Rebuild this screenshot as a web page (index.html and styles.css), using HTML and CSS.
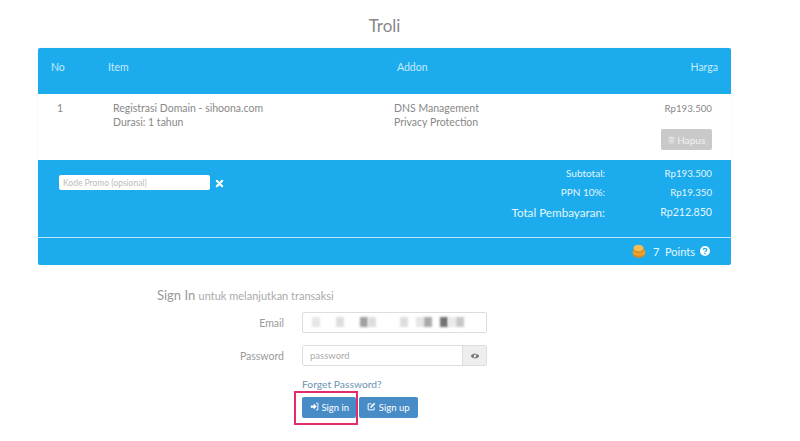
FILE: index.html
```html
<!DOCTYPE html>
<html lang="en">
<head>
  <meta charset="UTF-8" />
  <title>Troli</title>
  <link rel="stylesheet" href="styles.css">
</head>
<body>
  <main class="page">
    <h1 class="title">Troli</h1>

    <!-- Cart panel -->
    <section class="cart">
      <div class="cart-head">
        <span class="head-no">No</span>
        <span class="head-item">Item</span>
        <span class="head-addon">Addon</span>
        <span class="head-price">Harga</span>
      </div>

      <div class="cart-row">
        <div class="row-no">1</div>
        <div class="row-item">Registrasi Domain - sihoona.com<br>Durasi: 1 tahun</div>
        <div class="row-addon">DNS Management<br>Privacy Protection</div>
        <div class="row-price">
          <span>Rp193.500</span>
          <button class="btn-remove">
            <svg class="icon" viewBox="0 0 12 12"><path d="M2 3h8v8H2zM1 2h10M4.500 2V1h3v1M4.500 5v4M6 5v4M7.500 5v4" fill="none" stroke="currentColor"/></svg>
            Hapus
          </button>
        </div>
      </div>

      <div class="cart-sum">
        <div class="promo">
          <input class="promo-input" type="text" placeholder="Kode Promo (opsional)">
          <svg class="promo-x" viewBox="0 0 10 10"><path d="M2 2l6 6M8 2l-6 6" stroke="#fff" stroke-width="2.400" stroke-linecap="round"/></svg>
        </div>
        <div class="totals">
          <span>Subtotal:</span><span class="amount">Rp193.500</span>
          <span>PPN 10%:</span><span class="amount">Rp19.350</span>
          <span class="grand">Total Pembayaran:</span><span class="amount grand-amount">Rp212.850</span>
        </div>
      </div>

      <div class="cart-points">
        <svg class="coins" viewBox="0 0 14 14">
          <ellipse cx="7" cy="10.500" rx="6" ry="3.200" fill="#d98a1f"/>
          <ellipse cx="7" cy="8.500" rx="6.500" ry="3.200" fill="#eda32f"/>
          <ellipse cx="7" cy="6.500" rx="6" ry="3" fill="#dc9426"/>
          <ellipse cx="6.500" cy="4" rx="5" ry="3.200" fill="#f6bd4e"/>
        </svg>
        <span class="points-text">7 &nbsp;Points</span>
        <svg class="help" viewBox="0 0 10 10">
          <circle cx="5" cy="5" r="5" fill="#fff"/>
          <path d="M3.400 3.900c0-2 3.300-2 3.300 0 0 1.200-1.700 1.100-1.700 2.300" fill="none" stroke="#1cabec" stroke-width="1.200"/>
          <path d="M4.300 7.100h1.400v1.200H4.300z" fill="#1cabec"/>
        </svg>
      </div>
    </section>

    <!-- Sign in form -->
    <section class="signin">
      <h2 class="signin-title">Sign In <small>untuk melanjutkan transaksi</small></h2>

      <div class="field">
        <label class="field-label">Email</label>
        <div class="masked">
          <i class="m1"></i><i class="m2"></i><i class="m3"></i><i class="m4"></i><i class="m5"></i><i class="m6"></i><i class="m7"></i><i class="m8"></i><i class="m9"></i><i class="m10"></i>
        </div>
      </div>

      <div class="field">
        <label class="field-label">Password</label>
        <div class="input-group">
          <input class="pass-input" type="text" placeholder="password">
          <span class="addon">
            <svg class="eye" viewBox="0 0 12 10"><path d="M.500 5C3.500.800 8.500.800 11.500 5 8.500 9.200 3.500 9.200.500 5z" fill="#777"/><circle cx="6" cy="5" r="1.500" fill="#eee"/><path d="M8.500.500l-5 9" stroke="#eee"/></svg>
          </span>
        </div>
      </div>

      <div class="actions">
        <a class="forgot" href="#">Forget Password?</a>
        <div class="buttons">
          <button class="btn">
            <svg class="icon" viewBox="0 0 12 12"><path d="M1 4.500h4V2l4 4-4 4V7.500H1z" fill="#fff"/><path d="M8 1.500h2.500v9H8" fill="none" stroke="#fff" stroke-width="1.200"/></svg>
            Sign in
          </button>
          <button class="btn">
            <svg class="icon" viewBox="0 0 12 12"><path d="M9.500 7v3.500h-8v-8H6" fill="none" stroke="#fff" stroke-width="1.300"/><path d="M4.500 6L9.500 1 11 2.500 6 7.500H4.500z" fill="#fff"/></svg>
            Sign up
          </button>
          <span class="highlight"></span>
        </div>
      </div>
    </section>
  </main>
</body>
</html>
```

FILE: styles.css
```css
/* Reset & base */
*, *::before, *::after {
  box-sizing: border-box;
}
html, body {
  height: 100%;
}
body {
  margin: 0;
  background: #fff;
  color: #888;
  font-family: Lato, 'Open Sans', sans-serif;
  font-size: 10.500px;
}
button {
  font-family: inherit;
}
.icon {
  width: 9px;
  height: 9px;
}

.page {
  width: 693px;
  min-height: 441px;
  margin-left: 38px;
}
.title {
  margin: 0;
  height: 48px;
  padding-top: 15px;
  text-align: center;
  font-size: 17px;
  font-weight: 400;
  line-height: 21px;
  color: #888;
}

/* Cart panel */
.cart {
  border-radius: 2px;
  overflow: hidden;
  box-shadow: 0 0 1px rgba(0, 0, 0, 0.2);
}
.cart-head {
  display: grid;
  grid-template-columns: 57px 289px 1fr auto;
  height: 46px;
  padding: 13px 13px 0;
  background: #1cabec;
  color: #c5ecff;
  line-height: 13px;
}
.cart-row {
  display: grid;
  grid-template-columns: 56px 281px 1fr auto;
  height: 66px;
  padding: 7px 19px 0;
  background: #fff;
  line-height: 14px;
}
.row-price {
  display: flex;
  flex-direction: column;
  align-items: flex-end;
  gap: 14px;
  font-size: 9.700px;
}
.btn-remove {
  width: 51px;
  height: 21px;
  padding: 0;
  border: 0;
  border-radius: 2px;
  background: #c9c9c9;
  color: #f2f2f2;
  font-size: 10px;
}
.btn-remove .icon {
  width: 7px;
  height: 8px;
}

.cart-sum {
  display: flex;
  justify-content: space-between;
  height: 78px;
  padding: 15px 19px 0 21px;
  background: #1cabec;
  border-bottom: 1px solid #b9e6fa;
  color: #e3f6ff;
}
.promo {
  display: flex;
  align-items: flex-start;
  gap: 5px;
}
.promo-input {
  width: 151px;
  height: 15px;
  padding: 0 4px;
  border: 0;
  border-radius: 2px;
  background: #fff;
  font-family: inherit;
  font-size: 8.500px;
}
.promo-input::placeholder {
  color: #bbb;
}
.promo-x {
  width: 9px;
  height: 9px;
  margin-top: 4px;
}
.totals {
  display: grid;
  grid-template-columns: auto 107px;
  grid-auto-rows: 19.500px;
  margin-top: -12px;
  text-align: right;
  font-size: 10px;
  align-items: center;
}
.totals .amount {
  font-size: 9.700px;
}
.totals .grand {
  font-size: 11.700px;
}
.totals .grand-amount {
  font-size: 10.600px;
}

.cart-points {
  display: flex;
  align-items: center;
  justify-content: flex-end;
  height: 27px;
  padding: 0 21px 1px 0;
  background: #1cabec;
  color: #e3f6ff;
  font-size: 11px;
}
.coins {
  width: 14px;
  height: 14px;
  margin-right: 7px;
}
.help {
  width: 10px;
  height: 10px;
  margin-left: 5px;
}

/* Sign in form */
.signin {
  padding: 22px 0 0 119px;
}
.signin-title {
  margin: 0 0 8px;
  font-size: 13px;
  font-weight: 400;
  line-height: 17px;
  color: #999;
}
.signin-title small {
  font-size: 11px;
  color: #aaa;
}
.field {
  display: flex;
  align-items: center;
  margin-bottom: 12px;
}
.field-label {
  width: 127px;
  text-align: right;
  margin-right: 18px;
  color: #999;
}
.masked {
  display: flex;
  width: 185px;
  height: 21px;
  padding: 4px 0 0 9px;
  border: 1px solid #ddd;
  border-radius: 2px;
}
.masked i {
  width: 8px;
  height: 10px;
  filter: blur(0.800px);
}
.m1 { background: #e6e6e6; margin-right: 16px; }
.m2 { background: #dedede; margin-right: 16px; }
.m3 { background: #a0a0a0; }
.m4 { background: #ddd; margin-right: 24px; }
.m5 { background: #dedede; margin-right: 8px; }
.m6 { background: #e6e6e6; }
.m7 { background: #aaa; margin-right: 8px; }
.m8 { background: #737373; }
.m9 { background: #eaeaea; }
.m10 { background: #c8c8c8; }
.input-group {
  display: flex;
  width: 185px;
  height: 21px;
  border: 1px solid #ddd;
  border-radius: 2px;
}
.pass-input {
  flex: 1;
  min-width: 0;
  padding: 0 7px;
  border: 0;
  background: #fff;
  font-family: inherit;
  font-size: 9.500px;
}
.pass-input::placeholder {
  color: #aaa;
}
.addon {
  display: flex;
  align-items: center;
  justify-content: center;
  width: 24px;
  background: #eee;
  border-left: 1px solid #ddd;
}
.eye {
  width: 10px;
  height: 8px;
}

.actions {
  margin: -1px 0 0 145px;
}
.forgot {
  display: block;
  height: 20px;
  line-height: 14px;
  color: #6b93b5;
  font-size: 10.300px;
  text-decoration: none;
}
.buttons {
  position: relative;
  display: flex;
  gap: 3px;
}
.btn {
  height: 21px;
  padding: 0 8px;
  border: 0;
  border-radius: 2px;
  background: #478bc7;
  color: #fff;
  font-size: 9.500px;
  white-space: nowrap;
}
.btn:first-child {
  width: 54px;
}
.btn:nth-child(2) {
  width: 59px;
}
.highlight {
  position: absolute;
  left: -8px;
  top: -6px;
  width: 64px;
  height: 34px;
  border: 2.500px solid #e22c6c;
}
```
